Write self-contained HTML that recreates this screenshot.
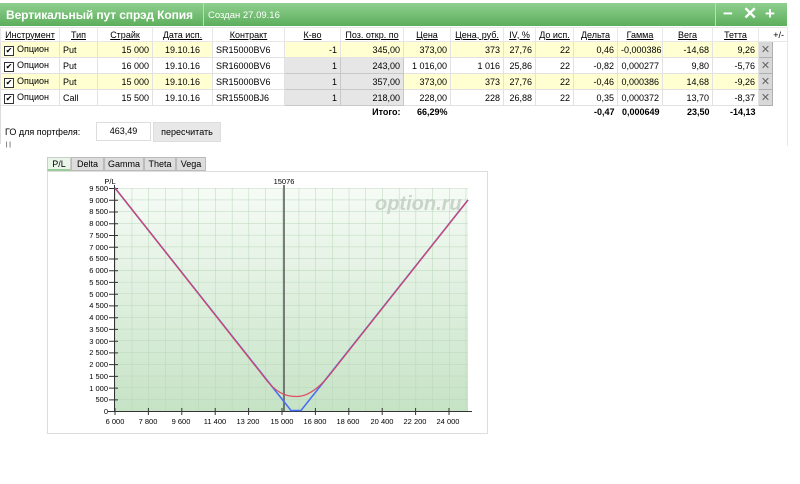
<!DOCTYPE html>
<html><head><meta charset="utf-8"><style>
body{margin:0;width:800px;height:484px;background:#fff;font-family:"Liberation Sans",Arial,sans-serif;font-size:9px;color:#000;position:relative;overflow:hidden}
.hdr{position:absolute;left:0;top:3px;width:787px;height:23px;background:linear-gradient(#8fcf8f,#5cae5c)}
.title{position:absolute;left:6px;top:5px;font-size:12px;font-weight:bold;color:#fff;letter-spacing:-0.1px}
.div1{position:absolute;left:203px;top:0;width:1px;height:23px;background:#b8e0b8}
.div2{position:absolute;left:715px;top:0;width:1px;height:23px;background:#b8e0b8}
.sub{position:absolute;left:208px;top:7px;font-size:9.5px;color:#fff}
.ic{position:absolute;top:1px;font-size:17px;font-weight:bold;color:#fff}
table{position:absolute;left:0;top:27px;border-collapse:collapse;table-layout:fixed;width:787px}
td,th{padding:0 3px;white-space:nowrap;overflow:hidden;border:1px solid #e2e2e2;font-size:9px}
th{height:13px;font-weight:normal;text-decoration:underline;text-align:center;color:#000;border-color:#e8e8e8}
td{height:15px;text-align:right}
.l{text-align:left}.c{text-align:center}
tr.y td{background:#ffffd2}
tr.y td.w{background:#fff}
td.g{background:#e6e6e6!important;border-color:#c8c8c8}
td.x{background:#d8d8d8!important;border:1px solid #b0b0b0;text-align:center;color:#666;font-size:11px;padding:0}
.cb{display:inline-block;width:8px;height:8px;border:1px solid #333;background:#fff;vertical-align:-1px;margin-right:3px;font-size:8px;line-height:8px;text-align:center}
tr.t td{border:none;font-weight:bold;height:12px}
</style></head><body>
<div class="hdr"><div class="title">Вертикальный пут спрэд Копия</div><div class="div1"></div><div class="sub">Создан 27.09.16</div><div class="div2"></div>
<div class="ic" style="left:723px">−</div><div class="ic" style="left:743px">✕</div><div class="ic" style="left:765px">+</div></div>
<table>
<colgroup><col style="width:59px"><col style="width:38px"><col style="width:55px"><col style="width:60px"><col style="width:72px"><col style="width:56px"><col style="width:63px"><col style="width:47px"><col style="width:53px"><col style="width:32px"><col style="width:38px"><col style="width:44px"><col style="width:45px"><col style="width:50px"><col style="width:46px"><col style="width:14px"><col style="width:15px"></colgroup>
<tr><th>Инструмент</th><th>Тип</th><th>Страйк</th><th>Дата исп.</th><th>Контракт</th><th>К-во</th><th>Поз. откр. по</th><th>Цена</th><th>Цена, руб.</th><th>IV, %</th><th>До исп.</th><th>Дельта</th><th>Гамма</th><th>Вега</th><th>Тетта</th><th colspan="2" style="text-decoration:none;text-align:right">+/-</th></tr>
<tr class="y"><td class="l"><span class="cb">✔</span>Опцион</td><td class="l">Put</td><td>15 000</td><td class="c">19.10.16</td><td class="l w">SR15000BV6</td><td>-1</td><td>345,00</td><td>373,00</td><td>373</td><td>27,76</td><td>22</td><td>0,46</td><td>-0,000386</td><td>-14,68</td><td>9,26</td><td class="x">✕</td><td style="border:none;background:#fff"></td></tr>
<tr><td class="l"><span class="cb">✔</span>Опцион</td><td class="l">Put</td><td>16 000</td><td class="c">19.10.16</td><td class="l">SR16000BV6</td><td class="g">1</td><td class="g">243,00</td><td>1 016,00</td><td>1 016</td><td>25,86</td><td>22</td><td>-0,82</td><td>0,000277</td><td>9,80</td><td>-5,76</td><td class="x">✕</td><td style="border:none"></td></tr>
<tr class="y"><td class="l"><span class="cb">✔</span>Опцион</td><td class="l">Put</td><td>15 000</td><td class="c">19.10.16</td><td class="l w">SR15000BV6</td><td class="g">1</td><td class="g">357,00</td><td>373,00</td><td>373</td><td>27,76</td><td>22</td><td>-0,46</td><td>0,000386</td><td>14,68</td><td>-9,26</td><td class="x">✕</td><td style="border:none;background:#fff"></td></tr>
<tr><td class="l"><span class="cb">✔</span>Опцион</td><td class="l">Call</td><td>15 500</td><td class="c">19.10.16</td><td class="l">SR15500BJ6</td><td class="g">1</td><td class="g">218,00</td><td>228,00</td><td>228</td><td>26,88</td><td>22</td><td>0,35</td><td>0,000372</td><td>13,70</td><td>-8,37</td><td class="x">✕</td><td style="border:none"></td></tr>
<tr class="t"><td colspan="7" style="text-align:right">Итого:</td><td>66,29%</td><td colspan="3"></td><td>-0,47</td><td>0,000649</td><td>23,50</td><td>-14,13</td><td colspan="2"></td></tr>
</table>
<div style="position:absolute;left:5px;top:127px">ГО для портфеля:</div>
<div style="position:absolute;left:96px;top:122px;width:53px;height:17px;border:1px solid #ddd;text-align:center;line-height:17px">463,49</div>
<div style="position:absolute;left:153px;top:122px;width:66px;height:18px;background:#e8e8e8;border:1px solid #ddd;text-align:center;line-height:18px">пересчитать</div>
<div style="position:absolute;left:6px;top:142px;font-size:6px">| |</div>
<div style="position:absolute;left:0;top:104px;width:1px;height:40px;background:#ddd"></div>
<div style="position:absolute;left:787px;top:40px;width:1px;height:106px;background:#e8e8e8"></div>
<div style="position:absolute;left:47px;top:157px;height:14px;display:flex">
<div style="width:22px;background:#eaf5ea;border:1px solid #ccc;border-bottom:2px solid #9c9;text-align:center;line-height:13px">P/L</div>
<div style="width:31px;background:#ddd;border:1px solid #bbb;text-align:center;line-height:13px">Delta</div>
<div style="width:38px;background:#ddd;border:1px solid #bbb;text-align:center;line-height:13px">Gamma</div>
<div style="width:30px;background:#ddd;border:1px solid #bbb;text-align:center;line-height:13px">Theta</div>
<div style="width:28px;background:#ddd;border:1px solid #bbb;text-align:center;line-height:13px">Vega</div></div>
<svg style="position:absolute;left:0;top:0" width="800" height="484" font-family="Liberation Sans,Arial,sans-serif" font-size="7.5">
<defs><linearGradient id="bg" x1="0" y1="0" x2="0" y2="1"><stop offset="0" stop-color="#f6fbf6"/><stop offset="1" stop-color="#c6e3c6"/></linearGradient>
<pattern id="gr" patternUnits="userSpaceOnUse" x="115" y="411" width="16.7" height="11.74"><path d="M0 0H16.7M0 0V11.74" stroke="#b9d6b9" stroke-width="1" fill="none"/></pattern></defs>
<rect x="47.5" y="171.5" width="440" height="262" fill="#fff" stroke="#ddd"/>
<rect x="115" y="188" width="353" height="223" fill="url(#bg)"/>
<rect x="115" y="188" width="353" height="223" fill="url(#gr)"/>
<text x="375" y="210" font-size="20" font-style="italic" font-weight="bold" fill="#c9d4c9">option.ru</text>
<line x1="114.5" y1="185" x2="114.5" y2="412" stroke="#333"/>
<line x1="108" y1="411.5" x2="472" y2="411.5" stroke="#333"/>
<line x1="284" y1="185" x2="284" y2="411" stroke="#555" stroke-width="1.5"/>
<text x="284" y="184" text-anchor="middle">15076</text>
<text x="110" y="184" text-anchor="middle">P/L</text>
<g text-anchor="end">
<text x="108" y="191">9 500</text><text x="108" y="203">9 000</text><text x="108" y="214">8 500</text><text x="108" y="226">8 000</text><text x="108" y="238">7 500</text><text x="108" y="250">7 000</text><text x="108" y="261">6 500</text><text x="108" y="273">6 000</text><text x="108" y="285">5 500</text><text x="108" y="297">5 000</text><text x="108" y="308">4 500</text><text x="108" y="320">4 000</text><text x="108" y="332">3 500</text><text x="108" y="344">3 000</text><text x="108" y="355">2 500</text><text x="108" y="367">2 000</text><text x="108" y="379">1 500</text><text x="108" y="391">1 000</text><text x="108" y="402">500</text><text x="108" y="414">0</text></g>
<path stroke="#333" d="M109 188.5h9M109 200.2h9M109 212h9M109 223.7h9M109 235.5h9M109 247.2h9M109 259h9M109 270.7h9M109 282.4h9M109 294.2h9M109 305.9h9M109 317.7h9M109 329.4h9M109 341.2h9M109 352.9h9M109 364.6h9M109 376.4h9M109 388.1h9M109 399.9h9M115 408v7M148.4 408v7M181.8 408v7M215.2 408v7M248.6 408v7M282 408v7M315.4 408v7M348.8 408v7M382.2 408v7M415.6 408v7M449 408v7"/>
<g text-anchor="middle"><text x="115" y="424">6 000</text><text x="148" y="424">7 800</text><text x="181" y="424">9 600</text><text x="215" y="424">11 400</text><text x="248" y="424">13 200</text><text x="282" y="424">15 000</text><text x="315" y="424">16 800</text><text x="348" y="424">18 600</text><text x="382" y="424">20 400</text><text x="415" y="424">22 200</text><text x="448" y="424">24 000</text></g>
<path d="M115 188L291 410.5H301L468 200" fill="none" stroke="#4a6ef5" stroke-width="1.6"/>
<path d="M115 188L268 382C280 396 290 396.5 297 396.5C305 396.5 315 392 328 377L468 200" fill="none" stroke="#e0405a" stroke-width="1.3" opacity="0.9"/>
</svg>
</body></html>
